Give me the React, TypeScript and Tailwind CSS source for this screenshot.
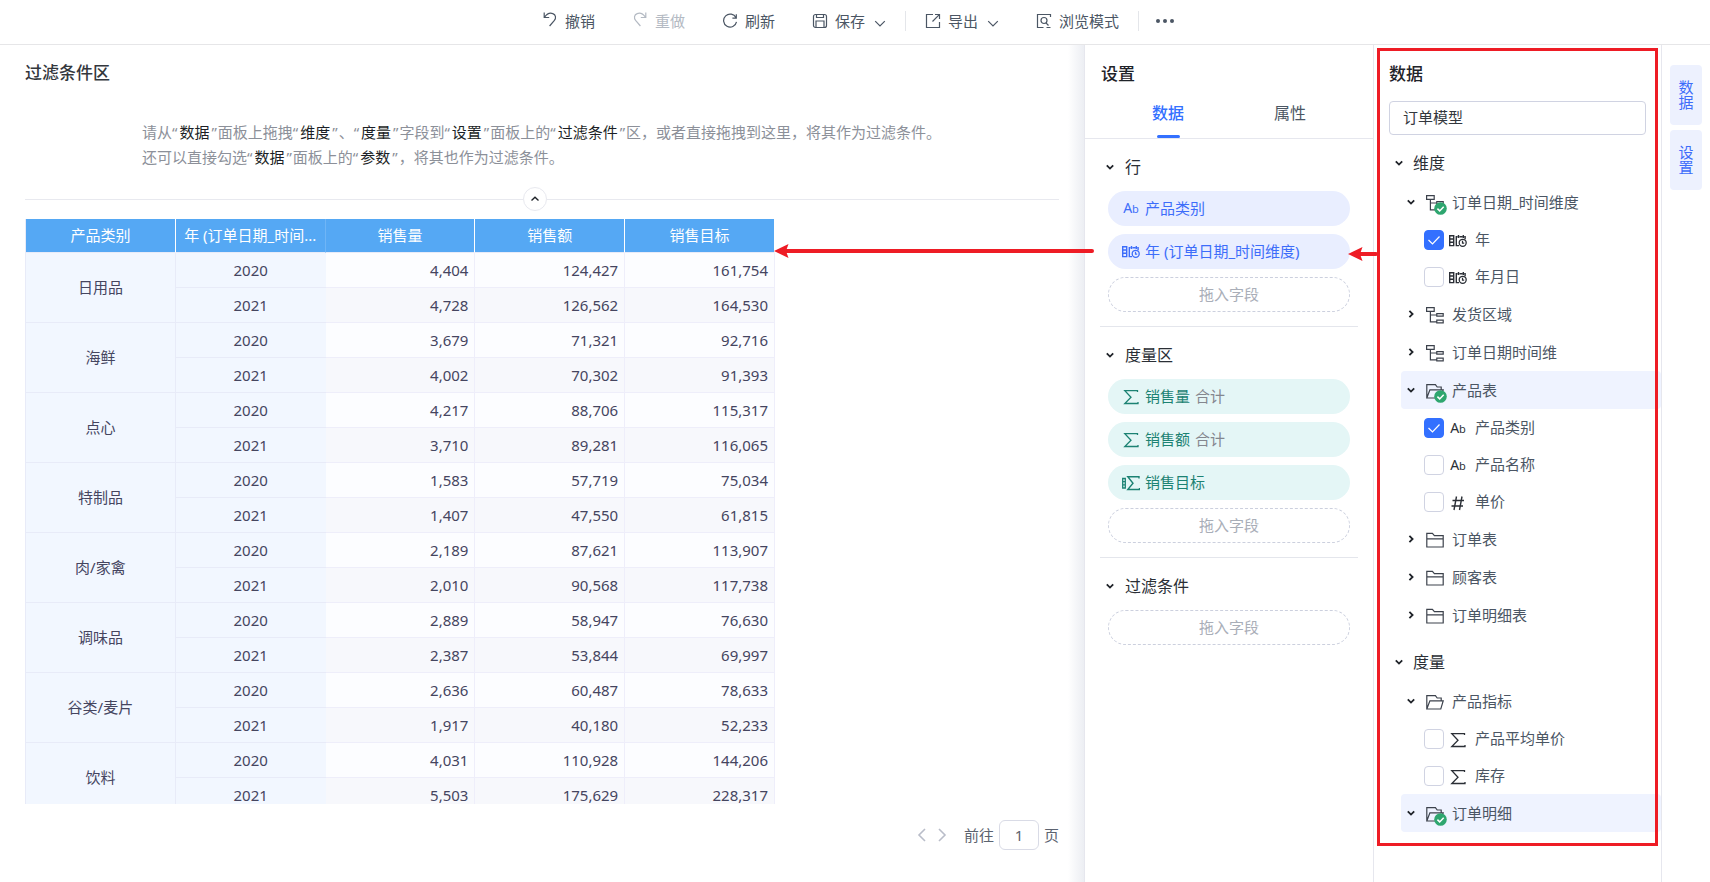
import { useState, type ReactNode } from 'react'
import clsx from 'clsx'

type FieldKind = 'text' | 'calendar' | 'number' | 'measure' | 'calcMeasure'

interface TreeRow {
  label: string
  level: 'group' | 'leaf'
  icon?: 'hierarchy' | 'folder'
  kind?: FieldKind
  open?: boolean
  used?: boolean
  checked?: boolean
  selected?: boolean
}

interface PillField {
  label: string
  kind: FieldKind
  aggregate?: string
}

const COLUMNS = ['产品类别', '年 (订单日期_时间...', '销售量', '销售额', '销售目标']

const TABLE_DATA = [
  { category: '日用品', rows: [['2020', '4,404', '124,427', '161,754'], ['2021', '4,728', '126,562', '164,530']] },
  { category: '海鲜', rows: [['2020', '3,679', '71,321', '92,716'], ['2021', '4,002', '70,302', '91,393']] },
  { category: '点心', rows: [['2020', '4,217', '88,706', '115,317'], ['2021', '3,710', '89,281', '116,065']] },
  { category: '特制品', rows: [['2020', '1,583', '57,719', '75,034'], ['2021', '1,407', '47,550', '61,815']] },
  { category: '肉/家禽', rows: [['2020', '2,189', '87,621', '113,907'], ['2021', '2,010', '90,568', '117,738']] },
  { category: '调味品', rows: [['2020', '2,889', '58,947', '76,630'], ['2021', '2,387', '53,844', '69,997']] },
  { category: '谷类/麦片', rows: [['2020', '2,636', '60,487', '78,633'], ['2021', '1,917', '40,180', '52,233']] },
  { category: '饮料', rows: [['2020', '4,031', '110,928', '144,206'], ['2021', '5,503', '175,629', '228,317']] },
]

const DIMENSIONS: TreeRow[] = [
  { label: '订单日期_时间维度', level: 'group', icon: 'hierarchy', open: true, used: true },
  { label: '年', level: 'leaf', kind: 'calendar', checked: true },
  { label: '年月日', level: 'leaf', kind: 'calendar' },
  { label: '发货区域', level: 'group', icon: 'hierarchy' },
  { label: '订单日期时间维', level: 'group', icon: 'hierarchy' },
  { label: '产品表', level: 'group', icon: 'folder', open: true, used: true, selected: true },
  { label: '产品类别', level: 'leaf', kind: 'text', checked: true },
  { label: '产品名称', level: 'leaf', kind: 'text' },
  { label: '单价', level: 'leaf', kind: 'number' },
  { label: '订单表', level: 'group', icon: 'folder' },
  { label: '顾客表', level: 'group', icon: 'folder' },
  { label: '订单明细表', level: 'group', icon: 'folder' },
]

const MEASURES: TreeRow[] = [
  { label: '产品指标', level: 'group', icon: 'folder', open: true },
  { label: '产品平均单价', level: 'leaf', kind: 'measure' },
  { label: '库存', level: 'leaf', kind: 'measure' },
  { label: '订单明细', level: 'group', icon: 'folder', open: true, used: true, selected: true },
]

const ROW_FIELDS: PillField[] = [
  { label: '产品类别', kind: 'text' },
  { label: '年 (订单日期_时间维度)', kind: 'calendar' },
]

const MEASURE_FIELDS: PillField[] = [
  { label: '销售量', kind: 'measure', aggregate: '合计' },
  { label: '销售额', kind: 'measure', aggregate: '合计' },
  { label: '销售目标', kind: 'calcMeasure' },
]

function Svg({ size = 18, width = 1.2, className, children }: { size?: number; width?: number; className?: string; children: ReactNode }) {
  return (
    <svg
      width={size}
      height={size}
      viewBox={`0 0 ${size} ${size}`}
      fill="none"
      stroke="currentColor"
      strokeWidth={width}
      className={clsx('shrink-0', className)}
      aria-hidden="true"
    >
      {children}
    </svg>
  )
}

function Caret({ open }: { open?: boolean }) {
  return (
    <Svg size={10} width={1.8} className="text-[#1f2329]">
      <path d={open ? 'M1.8 3.4 5 6.6l3.2-3.2' : 'M3.4 1.8 6.6 5 3.4 8.2'} />
    </Svg>
  )
}

function DropChevron() {
  return (
    <Svg size={12}>
      <path d="M1.2 4.2 6 9l4.8-4.8" />
    </Svg>
  )
}

function FieldIcon({ kind }: { kind: FieldKind }) {
  if (kind === 'text') {
    return (
      <span className="w-[18px] shrink-0 text-center text-sm leading-5 whitespace-nowrap" aria-hidden="true">
        A<span className="text-[11px]">b</span>
      </span>
    )
  }
  if (kind === 'number') {
    return (
      <Svg width={1.4}>
        <path d="M7.500 2.500 5 16M13 2.500 10.500 16M3.500 6.500H15M2.500 12H14" />
      </Svg>
    )
  }
  if (kind === 'calendar') {
    return (
      <Svg>
        <path d="M.7 3.800h4v9.800h-4zM.7 7h4M.7 10.300h4" strokeWidth="1.4" />
        <path d="M10 13.600H7.300V4.800h1.200M10.500 4.800h3M15.200 4.800h.9v2.400M9.500 3v3M14.300 3v3" strokeWidth="1.4" />
        <circle cx="13.700" cy="10.800" r="3.500" strokeWidth="1.3" />
        <path d="M13.500 8.800v2.300h1.700" />
      </Svg>
    )
  }
  if (kind === 'calcMeasure') {
    return (
      <Svg>
        <path d="M.7 4.500h2.600v9.500H.7zM.7 7.700h2.600M.7 10.800h2.600" strokeWidth="1.3" />
        <path d="M17 4.500V2.800H5.800L11 9.200l-5.200 6.300H17.500V14" strokeWidth="1.4" />
      </Svg>
    )
  }
  return (
    <Svg width={1.3}>
      <path d="M15.500 4V2.600H2.800L9 9.200l-6.200 6.300h13.200V14" />
    </Svg>
  )
}

function NodeIcon({ icon, open }: { icon?: 'hierarchy' | 'folder'; open?: boolean }) {
  if (icon === 'hierarchy') {
    return (
      <Svg>
        <path d="M.6 1.600h7.600v3.800H.6zM4.400 5.400v10.400h6.400M4.400 9h6.400M10.800 7.600h6.400v2.600h-6.400zM10.800 14.200h6.400v2.600h-6.400z" />
      </Svg>
    )
  }
  if (open) {
    return (
      <Svg>
        <path d="M.8 16V2.600h8.600l1.800 2.400h4v2.800M.8 16 3.900 7.800h13.300L14.800 16z" />
      </Svg>
    )
  }
  return (
    <Svg>
      <path d="M.8 16V2.400h5.600l2 2.200h8.800V16zM.8 7.800h16.400" />
    </Svg>
  )
}

function ToolButton({ icon, label, dropdown, disabled }: { icon: ReactNode; label: string; dropdown?: boolean; disabled?: boolean }) {
  return (
    <button
      type="button"
      disabled={disabled}
      className={clsx('flex h-8 items-center px-[18px] text-[15px]', disabled ? 'text-[#b4bac3]' : 'text-[#4b5664]')}
    >
      {icon}
      <span className="ml-[7px]">{label}</span>
      {dropdown && (
        <span className="mt-1 ml-[9px]">
          <DropChevron />
        </span>
      )}
    </button>
  )
}

function Toolbar() {
  return (
    <header className="flex h-[45px] shrink-0 items-center justify-center gap-px border-b border-[#e6e6e8] pr-3 pb-0.5">
      <ToolButton
        label="撤销"
        icon={
          <Svg size={16} className="-mt-1">
            <path d="M2.200 1.500v5h5M2.600 6.200C4.800 3 8 1.600 10.800 2.600c3.200 1.200 3.400 4.400 1.600 6.800L7.600 15" />
          </Svg>
        }
      />
      <ToolButton
        label="重做"
        disabled
        icon={
          <Svg size={16} className="-mt-1">
            <path d="M13.800 1.500v5h-5M13.400 6.200C11.200 3 8 1.600 5.200 2.600c-3.200 1.200-3.400 4.400-1.600 6.800L8.400 15" />
          </Svg>
        }
      />
      <ToolButton
        label="刷新"
        icon={
          <Svg size={16}>
            <path d="M14 4.800A6.500 6.500 0 1 0 14.500 8.800M14.300 1.200v3.900h-3.900" />
          </Svg>
        }
      />
      <ToolButton
        label="保存"
        dropdown
        icon={
          <Svg size={16}>
            <rect x="1.500" y="1.500" width="13" height="13" rx="2" />
            <path d="M4.500 1.500v3h7v-3M4 14.500V8h8v6.500" />
          </Svg>
        }
      />
      <span className="h-5 w-px bg-[#e4e6ea]" />
      <ToolButton
        label="导出"
        dropdown
        icon={
          <Svg size={16}>
            <path d="M8 1.500H1.500v13h13V9M10 1.500h4.500V6M14.300 1.700 7.500 8.500" />
          </Svg>
        }
      />
      <ToolButton
        label="浏览模式"
        icon={
          <Svg size={16}>
            <path d="M14.500 4V1.500h-13v13h6M14.500 14.500h-4" />
            <circle cx="8" cy="7.500" r="3" />
            <path d="m10 9.800 2.500 2.700" />
          </Svg>
        }
      />
      <span className="h-5 w-px bg-[#e4e6ea]" />
      <button type="button" aria-label="更多" className="ml-4 flex gap-[3px]">
        <span className="size-1 rounded-full bg-[#4b5664]" />
        <span className="size-1 rounded-full bg-[#4b5664]" />
        <span className="size-1 rounded-full bg-[#4b5664]" />
      </button>
    </header>
  )
}

function Key({ children }: { children: ReactNode }) {
  return (
    <span className="pr-px">
      “<b className="px-0.5 font-normal text-[#1c1f26]">{children}</b>”
    </span>
  )
}

function FilterZone() {
  return (
    <section>
      <h2 className="pt-4 text-[17px] leading-6 font-medium text-[#33373d]">过滤条件区</h2>
      <p className="mt-[35px] pl-[117px] text-[15px] leading-[25px] text-[#8c9099]">
        请从<Key>数据</Key>面板上拖拽<Key>维度</Key>、<Key>度量</Key>字段到<Key>设置</Key>面板上的<Key>过滤条件</Key>
        区，或者直接拖拽到这里，将其作为过滤条件。
        <br />
        还可以直接勾选<Key>数据</Key>面板上的<Key>参数</Key>，将其也作为过滤条件。
      </p>
      <div className="mt-[17px] flex items-center">
        <span className="h-px flex-1 bg-[#e8e9ef]" />
        <button
          type="button"
          aria-label="收起"
          className="flex size-6 items-center justify-center rounded-full border border-[#e8e9ef] text-[#1f2329]"
        >
          <Svg size={10} width={1.4}>
            <path d="M1.500 6.500 5 3.200l3.500 3.300" />
          </Svg>
        </button>
        <span className="h-px flex-1 bg-[#e8e9ef]" />
        <span className="h-px w-3.5 bg-[#e8e9ef]" />
      </div>
    </section>
  )
}

function DataTable() {
  return (
    <table className="w-[750px] table-fixed border-separate border-spacing-0 border-l border-[#e8ebf8] text-[15px] text-[#45455f]">
      <thead>
        <tr className="h-[34px] bg-[#55a8f4] text-white">
          {COLUMNS.map((name, i) => (
            <th
              key={name}
              className={clsx(
                'border-r border-b border-b-[#e8ebf8] p-0 font-normal whitespace-nowrap',
                i === 1 ? 'border-r-[#6fb5f6]' : 'border-r-white',
              )}
            >
              {name}
            </th>
          ))}
        </tr>
      </thead>
      <tbody>
        {TABLE_DATA.map(({ category, rows }) =>
          rows.map(([year, ...values], i) => (
            <tr key={category + year} className="h-[35px]">
              {i === 0 && (
                <th rowSpan={2} className="border-r border-b border-[#e8ebf8] bg-[#f2f7ff] p-0 font-normal">
                  {category}
                </th>
              )}
              <td className="border-b border-[#e8ebf8] bg-[#f2f7ff] p-0 text-center">{year}</td>
              {values.map((value, j) => (
                <td
                  key={j}
                  className={clsx(
                    'border-r border-b border-[#eeeefa] p-0 pr-1.5 text-right',
                    i === 0 ? 'bg-[#fcfdff]' : 'bg-[#f7f8fc]',
                  )}
                >
                  {value}
                </td>
              ))}
            </tr>
          )),
        )}
      </tbody>
    </table>
  )
}

function Pager() {
  return (
    <footer className="flex items-center justify-end pt-4 pb-8 text-[15px] text-[#5c6370]">
      <button type="button" aria-label="上一页" className="text-[#b9bdc9]">
        <Svg size={16} width={1.6}>
          <path d="M11 2 5 8l6 6" />
        </Svg>
      </button>
      <button type="button" aria-label="下一页" className="ml-1 text-[#b9bdc9]">
        <Svg size={16} width={1.6}>
          <path d="m5 2 6 6-6 6" />
        </Svg>
      </button>
      <label htmlFor="page" className="ml-3.5">
        前往
      </label>
      <input id="page" defaultValue="1" className="mr-[5px] ml-[5px] h-[30px] w-10 rounded-md border border-[#d9dbe6] text-center" />
      页
    </footer>
  )
}

function Pill({ field, tone }: { field: PillField; tone: 'blue' | 'green' }) {
  return (
    <li
      className={clsx(
        'flex h-[35px] items-center rounded-full pl-3.5 text-[15px]',
        tone === 'blue' ? 'bg-[#e9eeff] text-[#3d6dfa]' : 'bg-[#e4f6f6] text-[#1c8273]',
      )}
    >
      <FieldIcon kind={field.kind} />
      <span className="ml-[5px]">{field.label}</span>
      {field.aggregate && <span className="ml-[5px] text-[#84878f]">{field.aggregate}</span>}
    </li>
  )
}

function SettingsSection({ title, fields, tone = 'blue' }: { title: string; fields: PillField[]; tone?: 'blue' | 'green' }) {
  return (
    <section className="mx-[15px] border-b border-[#e4e6ec] pt-4 pb-3.5 last:border-b-0">
      <h3>
        <button type="button" className="flex h-6 items-center gap-2.5 pl-[5px] text-base text-[#2b2f36]">
          <Caret open />
          {title}
        </button>
      </h3>
      <ul className="mt-3 mr-2 ml-2 flex flex-col gap-2">
        {fields.map((field) => (
          <Pill key={field.label} field={field} tone={tone} />
        ))}
        <li className="flex h-[35px] items-center justify-center rounded-full border border-dashed border-[#ccd0de] text-[15px] text-[#a9aeb8]">
          拖入字段
        </li>
      </ul>
    </section>
  )
}

function SettingsPanel() {
  const [tab, setTab] = useState('数据')

  return (
    <aside className="w-[290px] shrink-0 border-x border-[#e6e7ee] bg-white">
      <h2 className="px-4 pt-[17px] text-[17px] leading-6 font-medium text-[#1f2329]">设置</h2>
      <div className="mt-1 flex border-b border-[#e6e7ee] px-[22px]" role="tablist">
        {['数据', '属性'].map((name) => (
          <button
            key={name}
            type="button"
            role="tab"
            aria-selected={tab === name}
            onClick={() => setTab(name)}
            className={clsx(
              'flex h-12 flex-1 flex-col items-center pt-[11px] text-base leading-6',
              tab === name ? 'font-medium text-[#3370ff]' : 'text-[#4b5664]',
            )}
          >
            {name}
            {tab === name && <span className="mt-auto h-[3px] w-[23px] rounded-full bg-[#3370ff]" />}
          </button>
        ))}
      </div>
      <SettingsSection title="行" fields={ROW_FIELDS} />
      <SettingsSection title="度量区" fields={MEASURE_FIELDS} tone="green" />
      <SettingsSection title="过滤条件" fields={[]} />
    </aside>
  )
}

function GroupRow({ row }: { row: TreeRow }) {
  return (
    <li className={clsx('rounded', row.selected && 'bg-[#eff3ff]')}>
      <button type="button" aria-expanded={!!row.open} className="flex h-[38px] w-full items-center pl-[5px] text-[15px] text-[#4b5664]">
        <Caret open={row.open} />
        <span className="relative mt-0.5 ml-2.5 text-[#3c424c]">
          <NodeIcon icon={row.icon} open={row.open} />
          {row.used && (
            <svg width="13" height="13" viewBox="0 0 13 13" className="absolute -right-[3px] -bottom-[3px]" aria-hidden="true">
              <circle cx="6.500" cy="6.500" r="6.300" fill="#2ea66f" />
              <path d="m3.400 6.600 2.300 2.300 4-4.200" fill="none" stroke="#fff" strokeWidth="1.5" />
            </svg>
          )}
        </span>
        <span className="ml-2">{row.label}</span>
      </button>
    </li>
  )
}

function LeafRow({ row }: { row: TreeRow }) {
  return (
    <li>
      <label className="flex h-[37px] items-center pl-[23px] text-[15px] text-[#4b5664]">
        <span className="grid place-items-center">
          <input
            type="checkbox"
            defaultChecked={row.checked}
            className="peer col-start-1 row-start-1 size-5 appearance-none rounded border border-[#d0d3e2] bg-white checked:border-[#3370ff] checked:bg-[#3370ff]"
          />
          <Svg size={14} width={1.2} className="pointer-events-none invisible col-start-1 row-start-1 text-white peer-checked:visible">
            <path d="M1.500 7 5.500 11 12.500 3.500" />
          </Svg>
        </span>
        <span className="mt-0.5 ml-[5px] flex items-center text-[#2b2f36]">
          <FieldIcon kind={row.kind ?? 'text'} />
        </span>
        <span className="ml-2">{row.label}</span>
      </label>
    </li>
  )
}

function FieldTree({ title, rows }: { title: string; rows: TreeRow[] }) {
  return (
    <section>
      <h3 className="pt-2">
        <button type="button" className="flex h-10 items-center gap-[9px] pl-5 text-base text-[#2b2f36]">
          <Caret open />
          {title}
        </button>
      </h3>
      <ul className="ml-[27px]">
        {rows.map((row) => (row.level === 'group' ? <GroupRow key={row.label} row={row} /> : <LeafRow key={row.label} row={row} />))}
      </ul>
    </section>
  )
}

function DataPanel() {
  return (
    <aside className="relative w-[288px] shrink-0 border-r border-[#e6e7ee] bg-white">
      <h2 className="px-[15px] pt-[17px] text-[17px] leading-6 font-medium text-[#1f2329]">数据</h2>
      <div className="px-[15px] pt-[15px]">
        <input
          aria-label="数据模型"
          defaultValue="订单模型"
          className="block h-[34px] w-full rounded border border-[#d0d3e2] px-[13px] pb-[3px] text-[15px] text-[#33373d]"
        />
      </div>
      <FieldTree title="维度" rows={DIMENSIONS} />
      <FieldTree title="度量" rows={MEASURES} />
      {/* highlight frame around the panel */}
      <div className="pointer-events-none absolute inset-x-[3px] top-[3px] h-[798px] border-[3px] border-[#ee1c25]" />
    </aside>
  )
}

function Arrow({ length, className }: { length: number; className: string }) {
  return (
    <svg width={length} height={14} viewBox={`0 0 ${length} 14`} className={clsx('pointer-events-none absolute', className)} aria-hidden="true">
      <path d={`M8 7H${length - 2}`} stroke="#ee1c25" strokeWidth="4" strokeLinecap="round" />
      <path d="M0 7 14.500 0 12 7l2.500 7z" fill="#ee1c25" />
    </svg>
  )
}

export default function App() {
  return (
    <div className="flex h-screen flex-col overflow-hidden bg-white font-['Noto_Sans','Noto_Sans_CJK_SC',sans-serif]">
      <Toolbar />
      <div className="relative flex min-h-0 flex-1">
        <main className="flex min-w-0 flex-1 flex-col px-[25px]">
          <FilterZone />
          <div className="mt-2 min-h-0 flex-1 overflow-hidden">
            <DataTable />
          </div>
          <Pager />
        </main>
        <div className="-ml-4 w-4 shrink-0 bg-linear-to-r from-white to-[#eceef3]" />
        <SettingsPanel />
        <DataPanel />
        <nav className="flex w-12 shrink-0 flex-col items-center gap-[5px] pt-5">
          {['数据', '设置'].map((name) => (
            <button
              key={name}
              type="button"
              className="flex h-[60px] w-8 items-center justify-center rounded bg-[#edf1fe] px-2 text-[15px] leading-[15px] text-[#3d6dfa]"
            >
              <span className="w-[15px] break-all">{name}</span>
            </button>
          ))}
        </nav>
        <Arrow length={320} className="top-[199px] right-[616px]" />
        <Arrow length={30} className="top-[202px] right-[332px]" />
      </div>
    </div>
  )
}
